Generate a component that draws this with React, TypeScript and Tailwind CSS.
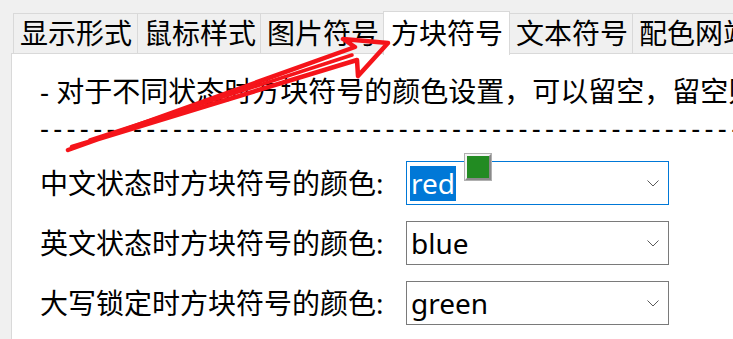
import React from 'react';

const tabs = [
  { name: '显示形式', w: 'w-[124px]' },
  { name: '鼠标样式', w: 'w-[123px]' },
  { name: '图片符号', w: 'w-[123px]' },
  { name: '方块符号', w: 'w-[127px]' },
  { name: '文本符号', w: 'w-[122px]' },
  { name: '配色网站', w: 'w-[124px]' },
];
const activeTab = 3;

type ColorRow = {
  label: string;
  value: string;
  focused?: boolean;
};

const rows: ColorRow[] = [
  { label: '中文状态时方块符号的颜色:', value: 'red', focused: true },
  { label: '英文状态时方块符号的颜色:', value: 'blue' },
  { label: '大写锁定时方块符号的颜色:', value: 'green' },
];

function Chevron() {
  return (
    <svg width="12" height="7" viewBox="0 0 12 7" className="shrink-0">
      <path d="M0.5 0.5 L6 6 L11.5 0.5" fill="none" stroke="#5a5a5a" strokeWidth="1" />
    </svg>
  );
}

function ComboBox({ value, focused }: { value: string; focused?: boolean }) {
  return (
    <div
      className={`relative flex h-[44px] w-[263px] items-center justify-between border pl-[3px] pr-[9px] ${
        focused ? 'border-[#0078d7]' : 'border-[#7a7a7a]'
      }`}
    >
      {focused ? (
        <span className="bg-[#0078d7] px-[1px] text-[28px] leading-[35px] text-white">{value}</span>
      ) : (
        <span className="px-[1px] text-[28px] leading-[35px] text-black">{value}</span>
      )}
      <Chevron />
      {focused && (
        <div className="absolute left-[58px] top-[-8px] h-[26px] w-[26px] border-2 border-t-[#f4f4f4] border-l-[#f4f4f4] border-r-[#8a8a8a] border-b-[#8a8a8a] bg-[#228b22] outline outline-1 outline-[#b0b0b0]" />
      )}
    </div>
  );
}

export default function App() {
  return (
    <div className="relative h-[339px] w-[733px] overflow-hidden bg-[#f0f0f0] font-['Noto_Sans','Noto_Sans_CJK_SC',sans-serif] text-black">
      <div className="relative z-10 ml-[13px] mt-[13px] flex h-[40px] items-start whitespace-nowrap">
        {tabs.map((tab, i) =>
          i === activeTab ? (
            <div
              key={tab.name}
              className={`-mt-[2px] h-[44px] shrink-0 border-x border-t border-[#d9d9d9] bg-white pl-[7px] text-[28px] leading-[42px] ${tab.w}`}
            >
              {tab.name}
            </div>
          ) : (
            <div
              key={tab.name}
              className={`h-[40px] shrink-0 border-t border-[#d9d9d9] bg-[#f0f0f0] pl-[6px] text-[28px] leading-[38px] ${tab.w} ${
                i === activeTab + 1 ? '' : 'border-l'
              }`}
            >
              {tab.name}
            </div>
          )
        )}
      </div>

      <div className="ml-[11px] h-[286px] border-l border-t border-[#d9d9d9] bg-white pl-[28px] pt-[21px]">
        <div className="h-[32px] whitespace-nowrap text-[28px] leading-[32px]">
          - 对于不同状态时方块符号的颜色设置，可以留空，留空则使用默认颜色
        </div>
        <div className="mt-[6px] h-[32px] overflow-hidden whitespace-nowrap font-['Liberation_Sans',sans-serif] text-[27px] leading-[32px] tracking-[4.3px]">
          {'-'.repeat(60)}
        </div>
        <div className="mt-[16px] flex flex-col gap-[16px]">
          {rows.map((row) => (
            <div key={row.label} className="flex items-center">
              <div className="w-[366px] shrink-0 whitespace-nowrap text-[28px] leading-[32px]">{row.label}</div>
              <ComboBox value={row.value} focused={row.focused} />
            </div>
          ))}
        </div>
      </div>

      <svg className="pointer-events-none absolute left-0 top-0 z-20" width="733" height="339" viewBox="0 0 733 339">
        <polyline
          points="68,150 355,47 343,39 388,43 358,76 357,60 72,147"
          fill="none"
          stroke="#f5141a"
          strokeWidth="4.5"
          strokeLinejoin="round"
          strokeLinecap="round"
        />
        <polyline
          points="90,140 352,55"
          fill="none"
          stroke="#f5141a"
          strokeWidth="3.5"
          strokeLinecap="round"
        />
      </svg>
    </div>
  );
}
